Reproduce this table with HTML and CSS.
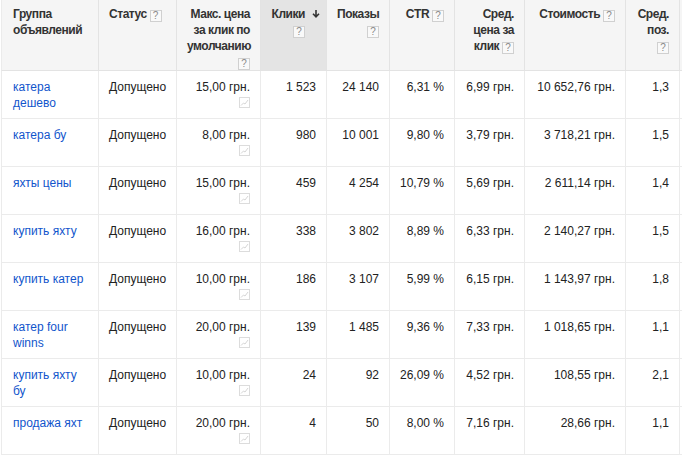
FILE: index.html
```html
<!DOCTYPE html>
<html lang="ru">
<head>
<meta charset="utf-8">
<link rel="stylesheet" href="styles.css">
</head>
<body>
<table class="grid">
  <thead>
    <tr>
      <th class="c1 left">Группа объявлений</th>
      <th class="c2 left">Статус <span class="help">?</span></th>
      <th class="c3">Макс. цена за клик по умолчанию <span class="help">?</span></th>
      <th class="c4 sorted">Клики<svg class="arrow" width="8" height="8" viewBox="0 0 8 8"><path d="M4 0V6.5M1 3.8L4 6.8L7 3.8" fill="none" stroke="#333" stroke-width="1.6"/></svg><br><span class="help">?</span></th>
      <th class="c5">Показы<br><span class="help">?</span></th>
      <th class="c6">CTR <span class="help">?</span></th>
      <th class="c7">Сред. цена за клик <span class="help">?</span></th>
      <th class="c8">Стоимость <span class="help">?</span></th>
      <th class="c9">Сред. поз.<br><span class="help">?</span></th>
      <th class="c10"></th>
    </tr>
  </thead>
  <tbody>
    <tr>
      <td class="left"><a href="#">катера дешево</a></td>
      <td class="left">Допущено</td>
      <td>15,00 грн.<br><span class="chart"><svg width="11" height="11" viewBox="0 0 11 11"><rect x="0.5" y="0.5" width="10" height="10" fill="#fff" stroke="#dcdcdc"/><path d="M2 8.5L4.5 6L6 7L9 3" fill="none" stroke="#d6d6d6"/></svg></span></td>
      <td>1 523</td>
      <td>24 140</td>
      <td>6,31 %</td>
      <td>6,99 грн.</td>
      <td>10 652,76 грн.</td>
      <td>1,3</td>
      <td></td>
    </tr>
    <tr>
      <td class="left"><a href="#">катера бу</a></td>
      <td class="left">Допущено</td>
      <td>8,00 грн.<br><span class="chart"><svg width="11" height="11" viewBox="0 0 11 11"><rect x="0.5" y="0.5" width="10" height="10" fill="#fff" stroke="#dcdcdc"/><path d="M2 8.5L4.5 6L6 7L9 3" fill="none" stroke="#d6d6d6"/></svg></span></td>
      <td>980</td>
      <td>10 001</td>
      <td>9,80 %</td>
      <td>3,79 грн.</td>
      <td>3 718,21 грн.</td>
      <td>1,5</td>
      <td></td>
    </tr>
    <tr>
      <td class="left"><a href="#">яхты цены</a></td>
      <td class="left">Допущено</td>
      <td>15,00 грн.<br><span class="chart"><svg width="11" height="11" viewBox="0 0 11 11"><rect x="0.5" y="0.5" width="10" height="10" fill="#fff" stroke="#dcdcdc"/><path d="M2 8.5L4.5 6L6 7L9 3" fill="none" stroke="#d6d6d6"/></svg></span></td>
      <td>459</td>
      <td>4 254</td>
      <td>10,79 %</td>
      <td>5,69 грн.</td>
      <td>2 611,14 грн.</td>
      <td>1,4</td>
      <td></td>
    </tr>
    <tr>
      <td class="left"><a href="#">купить яхту</a></td>
      <td class="left">Допущено</td>
      <td>16,00 грн.<br><span class="chart"><svg width="11" height="11" viewBox="0 0 11 11"><rect x="0.5" y="0.5" width="10" height="10" fill="#fff" stroke="#dcdcdc"/><path d="M2 8.5L4.5 6L6 7L9 3" fill="none" stroke="#d6d6d6"/></svg></span></td>
      <td>338</td>
      <td>3 802</td>
      <td>8,89 %</td>
      <td>6,33 грн.</td>
      <td>2 140,27 грн.</td>
      <td>1,5</td>
      <td></td>
    </tr>
    <tr>
      <td class="left"><a href="#">купить катер</a></td>
      <td class="left">Допущено</td>
      <td>10,00 грн.<br><span class="chart"><svg width="11" height="11" viewBox="0 0 11 11"><rect x="0.5" y="0.5" width="10" height="10" fill="#fff" stroke="#dcdcdc"/><path d="M2 8.5L4.5 6L6 7L9 3" fill="none" stroke="#d6d6d6"/></svg></span></td>
      <td>186</td>
      <td>3 107</td>
      <td>5,99 %</td>
      <td>6,15 грн.</td>
      <td>1 143,97 грн.</td>
      <td>1,8</td>
      <td></td>
    </tr>
    <tr>
      <td class="left"><a href="#">катер four winns</a></td>
      <td class="left">Допущено</td>
      <td>20,00 грн.<br><span class="chart"><svg width="11" height="11" viewBox="0 0 11 11"><rect x="0.5" y="0.5" width="10" height="10" fill="#fff" stroke="#dcdcdc"/><path d="M2 8.5L4.5 6L6 7L9 3" fill="none" stroke="#d6d6d6"/></svg></span></td>
      <td>139</td>
      <td>1 485</td>
      <td>9,36 %</td>
      <td>7,33 грн.</td>
      <td>1 018,65 грн.</td>
      <td>1,1</td>
      <td></td>
    </tr>
    <tr>
      <td class="left"><a href="#">купить яхту бу</a></td>
      <td class="left">Допущено</td>
      <td>10,00 грн.<br><span class="chart"><svg width="11" height="11" viewBox="0 0 11 11"><rect x="0.5" y="0.5" width="10" height="10" fill="#fff" stroke="#dcdcdc"/><path d="M2 8.5L4.5 6L6 7L9 3" fill="none" stroke="#d6d6d6"/></svg></span></td>
      <td>24</td>
      <td>92</td>
      <td>26,09 %</td>
      <td>4,52 грн.</td>
      <td>108,55 грн.</td>
      <td>2,1</td>
      <td></td>
    </tr>
    <tr>
      <td class="left"><a href="#">продажа яхт</a></td>
      <td class="left">Допущено</td>
      <td>20,00 грн.<br><span class="chart"><svg width="11" height="11" viewBox="0 0 11 11"><rect x="0.5" y="0.5" width="10" height="10" fill="#fff" stroke="#dcdcdc"/><path d="M2 8.5L4.5 6L6 7L9 3" fill="none" stroke="#d6d6d6"/></svg></span></td>
      <td>4</td>
      <td>50</td>
      <td>8,00 %</td>
      <td>7,16 грн.</td>
      <td>28,66 грн.</td>
      <td>1,1</td>
      <td></td>
    </tr>
  </tbody>
</table>
</body>
</html>
```

FILE: styles.css
```css
html, body {
  margin: 0;
  padding: 0;
  background: #fff;
  overflow: hidden;
}
body {
  font-family: Arial, "Liberation Sans", sans-serif;
  font-size: 12px;
  line-height: 16px;
  color: #222;
}
.grid {
  margin-left: 1px;
  border-collapse: separate;
  border-spacing: 0;
  table-layout: fixed;
  width: 740px;
}
.grid th, .grid td {
  box-sizing: border-box;
  border-right: 1px solid #ebebeb;
  border-bottom: 1px solid #ebebeb;
  padding: 0 10px 0 10px;
  text-align: right;
  vertical-align: top;
}
.grid th:first-child, .grid td:first-child {
  border-left: 1px solid #ebebeb;
  padding-left: 11px;
}
.grid th {
  background: #f5f5f5;
  border-right-color: #e3e3e3;
  border-bottom-color: #e3e3e3;
  font-weight: bold;
  color: #333;
  height: 70px;
  padding-top: 6px;
  letter-spacing: -0.45px;
}
.grid th.sorted {
  background: #e4e4e4;
  padding-right: 21px;
  position: relative;
}
.grid td {
  height: 48px;
  padding-top: 8px;
  color: #222;
  white-space: nowrap;
}
.grid td.left {
  white-space: normal;
}
.grid .left { text-align: left; }
.c1 { width: 98px; }
.c2 { width: 78px; }
.c3 { width: 84px; }
.c4 { width: 66px; }
.c5 { width: 63px; }
.c6 { width: 65px; }
.c7 { width: 70px; }
.c8 { width: 101px; }
.c9 { width: 54px; }
.c10 { width: 63px; }
.arrow {
  position: absolute;
  right: 6px;
  top: 10px;
}
.help {
  display: inline-block;
  box-sizing: border-box;
  width: 12px;
  height: 12px;
  border: 1px solid #d0d0d0;
  background: #f9f9f9;
  color: #8a8a8a;
  font-size: 10px;
  line-height: 10px;
  font-weight: normal;
  letter-spacing: 0;
  text-align: center;
  vertical-align: -1px;
}
a {
  color: #1155cc;
  text-decoration: none;
}
.chart {
  display: inline-block;
  height: 16px;
  vertical-align: top;
}
.chart svg {
  display: block;
  margin-top: 2px;
}
```
